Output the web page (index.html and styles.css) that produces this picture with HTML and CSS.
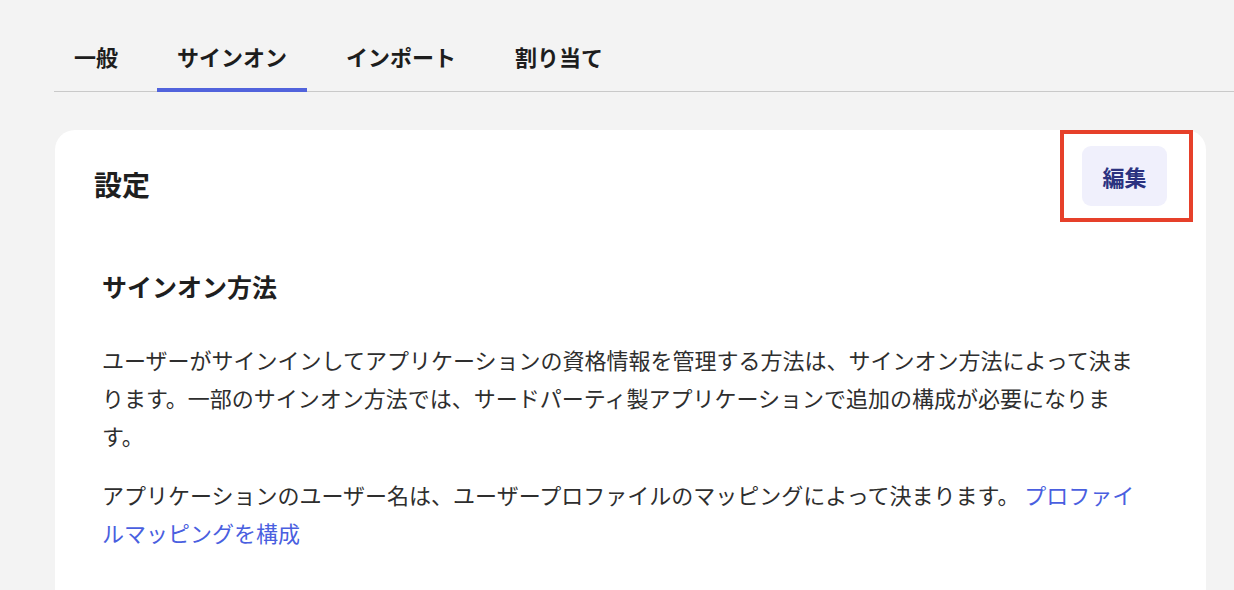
FILE: index.html
```html
<!DOCTYPE html>
<html lang="ja">
<head>
  <meta charset="UTF-8">
  <title>アプリケーション設定</title>
  <link rel="stylesheet" href="styles.css">
</head>
<body>
  <div class="page">
    <nav class="tabs">
      <a class="tab">一般</a>
      <a class="tab active">サインオン</a>
      <a class="tab">インポート</a>
      <a class="tab">割り当て</a>
    </nav>

    <div class="card">
      <div class="card-header">
        <h2>設定</h2>
        <div class="highlight">
          <button class="edit-btn">編集</button>
        </div>
      </div>

      <section class="section">
        <h3>サインオン方法</h3>
        <p>ユーザーがサインインしてアプリケーションの資格情報を管理する方法は、サインオン方法によって決まります。一部のサインオン方法では、サードパーティ製アプリケーションで追加の構成が必要になります。</p>
        <p>アプリケーションのユーザー名は、ユーザープロファイルのマッピングによって決まります。 <a class="link" href="#">プロファイルマッピングを構成</a></p>
      </section>
    </div>
  </div>
</body>
</html>
```

FILE: styles.css
```css
body {
  margin: 0;
  background: #f3f3f3;
  font-family: "Noto Sans CJK JP", "Noto Sans", sans-serif;
  color: #2e2e2e;
}
.page {
  height: 590px;
  overflow: hidden;
  padding: 27px 0 0 54px;
  box-sizing: border-box;
}
.tabs {
  display: flex;
  gap: 19px;
  border-bottom: 1px solid #c9c9c9;
}
.tab {
  padding: 14px 20px 17px;
  font-size: 22px;
  line-height: 30px;
  font-weight: 700;
  color: #1d1d1d;
  border-bottom: 4px solid transparent;
  margin-bottom: -1px;
}
.tab.active {
  border-bottom-color: #5163dc;
}
.card {
  margin: 38px 28px 0 1px;
  background: #fff;
  border-radius: 20px;
  padding: 0 13px 120px 39px;
}
.card-header {
  display: flex;
  justify-content: space-between;
  align-items: flex-start;
}
.card-header h2 {
  margin: 34px 0 0;
  font-size: 28px;
  line-height: 40px;
  font-weight: 700;
  color: #1f1f1f;
}
.highlight {
  border: 4px solid #e6402a;
  padding: 12px 22px 12px 18px;
}
.edit-btn {
  display: block;
  width: 85px;
  height: 60px;
  border: none;
  border-radius: 9px;
  background: #f0f0fc;
  color: #2b3280;
  font-family: inherit;
  font-size: 22px;
  font-weight: 700;
  padding: 0;
}
.section {
  padding: 46px 49px 0 8px;
}
.section h3 {
  margin: 0;
  font-size: 25px;
  line-height: 36px;
  font-weight: 700;
  color: #1f1f1f;
}
.section p {
  margin: 36px 0 0;
  font-size: 22px;
  line-height: 38px;
}
.section p + p {
  margin-top: 21px;
}
.link {
  color: #4a5fe0;
  text-decoration: none;
}
```
